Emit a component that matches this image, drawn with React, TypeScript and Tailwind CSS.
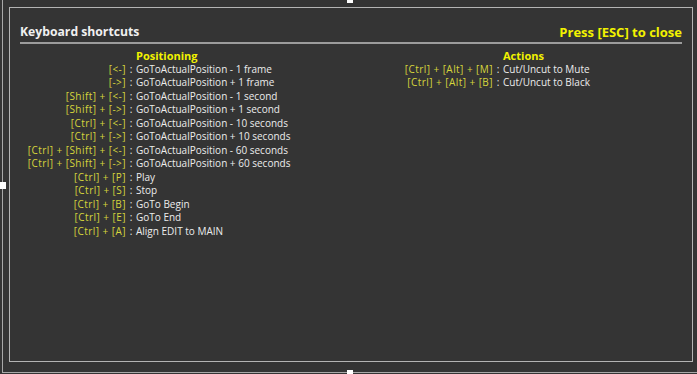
import React from "react";

const left: [string, string][] = [
  ["[<-]", "GoToActualPosition - 1 frame"],
  ["[->]", "GoToActualPosition + 1 frame"],
  ["[Shift] + [<-]", "GoToActualPosition - 1 second"],
  ["[Shift] + [->]", "GoToActualPosition + 1 second"],
  ["[Ctrl] + [<-]", "GoToActualPosition - 10 seconds"],
  ["[Ctrl] + [->]", "GoToActualPosition + 10 seconds"],
  ["[Ctrl] + [Shift] + [<-]", "GoToActualPosition - 60 seconds"],
  ["[Ctrl] + [Shift] + [->]", "GoToActualPosition + 60 seconds"],
  ["[Ctrl] + [P]", "Play"],
  ["[Ctrl] + [S]", "Stop"],
  ["[Ctrl] + [B]", "GoTo Begin"],
  ["[Ctrl] + [E]", "GoTo End"],
  ["[Ctrl] + [A]", "Align EDIT to MAIN"],
];

const right: [string, string][] = [
  ["[Ctrl] + [Alt] + [M]", "Cut/Uncut to Mute"],
  ["[Ctrl] + [Alt] + [B]", "Cut/Uncut to Black"],
];

function Column({
  title,
  rows,
  keyW,
  colW,
}: {
  title: string;
  rows: [string, string][];
  keyW: string;
  colW: string;
}) {
  return (
    <div className={`flex flex-col ${colW}`}>
      <div className="flex leading-[13.5px]">
        <div className={`${keyW} shrink-0`} />
        <div className="w-[10px] shrink-0" />
        <div className="font-bold text-[11px] text-[#f2f200]">{title}</div>
      </div>
      {rows.map(([k, d]) => (
        <div key={k + d} className="flex leading-[13.5px] text-[10px] whitespace-nowrap">
          <div className={`${keyW} shrink-0 text-right text-[#d6d63c] tracking-[0.45px]`}>{k}</div>
          <div className="w-[10px] shrink-0 text-center text-[#e8e8e8]">:</div>
          <div className="text-[#ececec]">{d}</div>
        </div>
      ))}
    </div>
  );
}

export default function App() {
  return (
    <div
      className="relative w-[697px] h-[374px] bg-[#343434] pl-[2px] overflow-hidden"
      style={{ fontFamily: "'Open Sans', 'Liberation Sans', sans-serif" }}
    >
      <div className="h-[373px] border-l border-b border-[#a8a8a8] pt-[7px] pl-[6px]">
        <div className="w-[684px] h-[355px] border border-[#b4b4b4] px-[10px] pt-[16px]">
          <div className="flex items-center justify-between h-[17px] border-b-2 border-[#9c9c9c] pb-[1px] box-content">
            <span className="font-bold text-[12.2px] text-[#f0f0f0]">Keyboard shortcuts</span>
            <span className="font-bold text-[13px] text-[#f2f200]">Press [ESC] to close</span>
          </div>
          <div className="flex pt-[5px]">
            <Column title="Positioning" rows={left} keyW="w-[106px]" colW="w-[380px]" />
            <Column title="Actions" rows={right} keyW="w-[93px]" colW="w-[260px]" />
          </div>
        </div>
      </div>
      <div className="absolute left-[347px] top-0 w-[6px] h-[3px] bg-white" />
      <div className="absolute left-0 top-[182px] w-[6px] h-[7px] bg-white" />
      <div className="absolute left-[347px] top-[370px] w-[6px] h-[4px] bg-white" />
    </div>
  );
}
